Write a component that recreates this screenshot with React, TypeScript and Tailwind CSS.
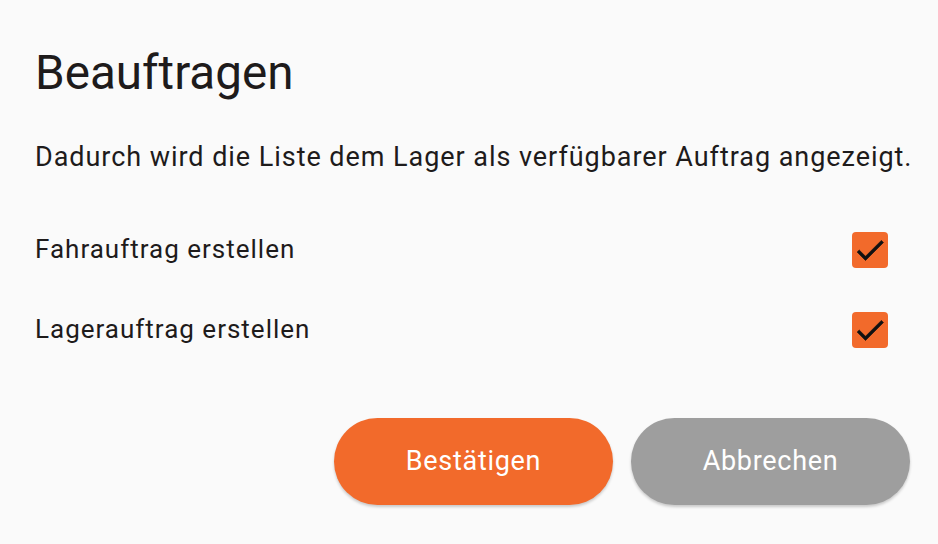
import React from "react";

function Check() {
  return (
    <div className="w-[36px] h-[36px] rounded-[4px] bg-[#f26a2b] relative overflow-hidden">
      <svg width="36" height="36" viewBox="0 0 24 24" className="absolute left-0 top-0">
        <path d="M9 16.17L4.83 12l-1.42 1.41L9 19 21 7l-1.41-1.41z" fill="#111" stroke="#111" strokeWidth="0.4" />
      </svg>
    </div>
  );
}

export default function App() {
  return (
    <div
      className="w-[938px] h-[544px] bg-[#fafafa] text-[#1e1b1b] flex flex-col px-[35px]"
      style={{ fontFamily: "Roboto, sans-serif" }}
    >
      <h1 className="text-[47.6px] leading-none mt-[50px] font-normal">Beauftragen</h1>
      <p className="text-[27px] tracking-[0.95px] leading-none mt-[46px] whitespace-nowrap">
        Dadurch wird die Liste dem Lager als verfügbarer Auftrag angezeigt.
      </p>
      <div className="flex flex-col mt-[61px] gap-[44px]">
        <div className="flex items-center justify-between pr-[15px] h-[36px]">
          <span className="text-[26px] tracking-[1px]">Fahrauftrag erstellen</span>
          <Check />
        </div>
        <div className="flex items-center justify-between pr-[15px] h-[36px]">
          <span className="text-[26px] tracking-[1px]">Lagerauftrag erstellen</span>
          <Check />
        </div>
      </div>
      <div className="flex justify-end gap-[18px] mt-[70px] -mr-[7px]">
        <button className="w-[279px] h-[87px] rounded-full bg-[#f26a2b] text-white text-[27px] tracking-[0.7px] shadow-[0_2px_3px_rgba(0,0,0,0.2)]">
          Bestätigen
        </button>
        <button className="w-[279px] h-[87px] rounded-full bg-[#9e9e9e] text-white text-[27px] tracking-[0.7px] shadow-[0_2px_3px_rgba(0,0,0,0.2)]">
          Abbrechen
        </button>
      </div>
    </div>
  );
}
